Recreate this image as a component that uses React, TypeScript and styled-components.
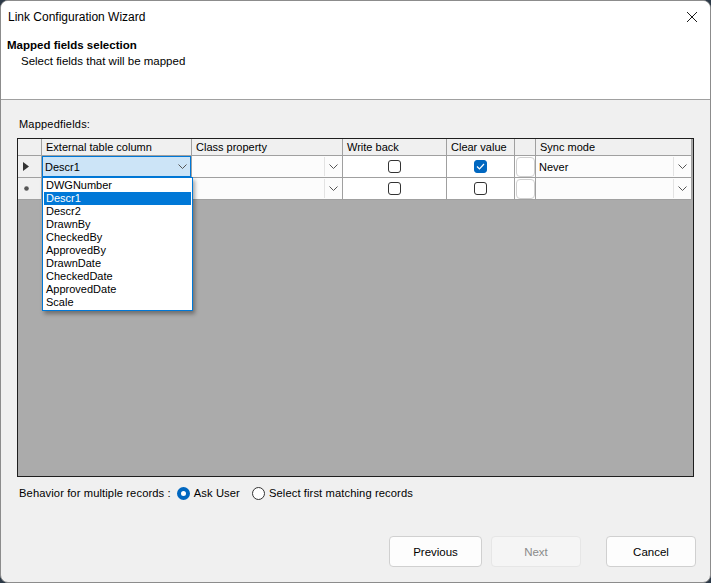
import React from "react";
import styled, { createGlobalStyle } from "styled-components";

const GlobalStyle = createGlobalStyle`
  html, body {
    margin: 0;
    padding: 0;
    background: #2c3947;
  }
  * { box-sizing: border-box; }
`;

const Window = styled.div`
  width: 711px;
  height: 583px;
  background: #f0f0f0;
  border: 1px solid #8c8c8c;
  border-radius: 8px;
  overflow: hidden;
  display: flex;
  flex-direction: column;
  font-family: "Liberation Sans", Arial, sans-serif;
  color: #000;
`;

const Header = styled.div`
  height: 99px;
  background: #fff;
  border-bottom: 1px solid #a0a0a0;
  position: relative;
`;

const TitleBar = styled.div`
  height: 31px;
  display: flex;
  align-items: center;
  justify-content: space-between;
  padding: 0 8px 0 7px;
`;

const Title = styled.div`
  font-size: 12px;
`;

const Close = styled.div`
  width: 14px;
  height: 14px;
  margin-right: 3px;
  display: flex;
`;

const Heading = styled.div`
  font-size: 11.5px;
  font-weight: bold;
  padding-left: 6px;
  margin-top: 7px;
`;

const SubHeading = styled.div`
  font-size: 11.5px;
  padding-left: 20px;
  margin-top: 4px;
`;

const Body = styled.div`
  flex: 1;
  padding: 18px 16px 0 16px;
  display: flex;
  flex-direction: column;
`;

const FieldLabel = styled.div`
  font-size: 11px;
  padding-left: 2px;
  height: 20px;
  letter-spacing: 0.2px;
`;

const Grid = styled.div`
  position: relative;
  height: 339px;
  border: 1px solid #1e1e1e;
  background: #ababab;
  display: flex;
  flex-direction: column;
  font-size: 11px;
`;

const cols = "24px 150px 151px 104px 68px 21px 156px";

const Row = styled.div<{ $h: number }>`
  display: grid;
  grid-template-columns: ${cols};
  height: ${(p) => p.$h}px;
`;

const HeadCell = styled.div`
  background: #f0f0f0;
  border-right: 1px solid #a0a0a0;
  border-bottom: 1px solid #a0a0a0;
  padding-left: 4px;
  display: flex;
  align-items: center;
  white-space: nowrap;
  overflow: hidden;
`;

const RowHead = styled.div`
  background: #f0f0f0;
  border-right: 1px solid #a0a0a0;
  border-bottom: 1px solid #a0a0a0;
  display: flex;
  align-items: center;
  padding-left: 5px;
`;

const Cell = styled.div<{ $center?: boolean }>`
  background: #fff;
  border-right: 1px solid #a0a0a0;
  border-bottom: 1px solid #a0a0a0;
  display: flex;
  align-items: center;
  justify-content: ${(p) => (p.$center ? "center" : "flex-start")};
`;

const Combo = styled.div<{ $active?: boolean }>`
  flex: 1;
  height: 100%;
  display: flex;
  align-items: center;
  background: ${(p) => (p.$active ? "#cce4f7" : "#fcfcfc")};
  border: 1px solid ${(p) => (p.$active ? "#0078d7" : "transparent")};
`;

const ComboText = styled.div`
  flex: 1;
  padding-left: 2px;
  white-space: nowrap;
`;

const ComboButton = styled.div<{ $divider?: boolean }>`
  width: 17px;
  height: 100%;
  display: flex;
  align-items: center;
  justify-content: center;
  border-left: 1px solid ${(p) => (p.$divider ? "#e3e3e3" : "transparent")};
`;

const Check = styled.div<{ $on?: boolean }>`
  width: 13px;
  height: 13px;
  border-radius: 3px;
  border: 1px solid ${(p) => (p.$on ? "#0067c0" : "#333")};
  background: ${(p) => (p.$on ? "#0067c0" : "#fff")};
  display: flex;
  align-items: center;
  justify-content: center;
`;

const SideButton = styled.div`
  width: 19px;
  height: 20px;
  margin-left: 1px;
  border: 1px solid #d0d0d0;
  border-radius: 4px;
  background: #fff;
`;

const Filler = styled.div`
  flex: 1;
`;

const DropList = styled.div`
  position: absolute;
  left: 24px;
  top: 38px;
  width: 151px;
  background: #fff;
  border: 1px solid #0078d7;
  box-shadow: 2px 3px 4px rgba(0, 0, 0, 0.35);
  padding: 1px 1px;
  z-index: 2;
`;

const DropItem = styled.div<{ $sel?: boolean }>`
  height: 13px;
  line-height: 13px;
  padding-left: 2px;
  font-size: 11px;
  background: ${(p) => (p.$sel ? "#0078d7" : "transparent")};
  color: ${(p) => (p.$sel ? "#fff" : "#000")};
`;

const OptionsRow = styled.div`
  display: flex;
  align-items: center;
  height: 32px;
  padding-left: 2px;
  font-size: 11.2px;
  letter-spacing: 0.1px;
`;

const Radio = styled.div<{ $on?: boolean }>`
  width: 13px;
  height: 13px;
  border-radius: 50%;
  margin: 0 4px 0 6px;
  border: ${(p) => (p.$on ? "4px solid #0067c0" : "1px solid #333")};
  background: #fff;
`;

const RadioLabel = styled.span`
  margin-right: 6px;
`;

const Footer = styled.div`
  display: flex;
  justify-content: flex-end;
  padding-top: 27px;
  margin-right: -2px;
`;

const Button = styled.div<{ $w: number; $gap: number; $disabled?: boolean }>`
  width: ${(p) => p.$w}px;
  height: 31px;
  margin-left: ${(p) => p.$gap}px;
  border: 1px solid ${(p) => (p.$disabled ? "#e6e6e6" : "#d0d0d0")};
  border-radius: 4px;
  background: ${(p) => (p.$disabled ? "#f5f5f5" : "#fdfdfd")};
  color: ${(p) => (p.$disabled ? "#8a8a8a" : "#000")};
  display: flex;
  align-items: center;
  justify-content: center;
  font-size: 11.5px;
`;

const Chevron = () => (
  <svg width="9" height="5" viewBox="0 0 9 5">
    <path d="M0.5 0.5 L4.5 4.5 L8.5 0.5" fill="none" stroke="#555" strokeWidth="1" />
  </svg>
);

const Tick = () => (
  <svg width="9" height="7" viewBox="0 0 9 7">
    <path d="M1 3.5 L3.5 6 L8 1" fill="none" stroke="#fff" strokeWidth="1.2" />
  </svg>
);

const items = [
  "DWGNumber",
  "Descr1",
  "Descr2",
  "DrawnBy",
  "CheckedBy",
  "ApprovedBy",
  "DrawnDate",
  "CheckedDate",
  "ApprovedDate",
  "Scale",
];

export default function App() {
  return (
    <>
      <GlobalStyle />
      <Window>
        <Header>
          <TitleBar>
            <Title>Link Configuration Wizard</Title>
            <Close>
              <svg width="14" height="14" viewBox="0 0 14 14">
                <path d="M2 2 L12 12 M12 2 L2 12" stroke="#1a1a1a" strokeWidth="1" />
              </svg>
            </Close>
          </TitleBar>
          <Heading>Mapped fields selection</Heading>
          <SubHeading>Select fields that will be mapped</SubHeading>
        </Header>
        <Body>
          <FieldLabel>Mappedfields:</FieldLabel>
          <Grid>
            <Row $h={17}>
              <HeadCell />
              <HeadCell>External table column</HeadCell>
              <HeadCell>Class property</HeadCell>
              <HeadCell>Write back</HeadCell>
              <HeadCell>Clear value</HeadCell>
              <HeadCell />
              <HeadCell>Sync mode</HeadCell>
            </Row>
            <Row $h={22}>
              <RowHead>
                <svg width="6" height="9" viewBox="0 0 6 9">
                  <path d="M0 0 L6 4.5 L0 9 Z" fill="#333" />
                </svg>
              </RowHead>
              <Cell>
                <Combo $active>
                  <ComboText>Descr1</ComboText>
                  <ComboButton>
                    <Chevron />
                  </ComboButton>
                </Combo>
              </Cell>
              <Cell>
                <Combo>
                  <ComboText />
                  <ComboButton $divider>
                    <Chevron />
                  </ComboButton>
                </Combo>
              </Cell>
              <Cell $center>
                <Check />
              </Cell>
              <Cell $center>
                <Check $on>
                  <Tick />
                </Check>
              </Cell>
              <Cell>
                <SideButton />
              </Cell>
              <Cell>
                <Combo>
                  <ComboText>Never</ComboText>
                  <ComboButton $divider>
                    <Chevron />
                  </ComboButton>
                </Combo>
              </Cell>
            </Row>
            <Row $h={22}>
              <RowHead>
                <svg width="7" height="7" viewBox="0 0 7 7">
                  <circle cx="3.5" cy="3.5" r="2.3" fill="#555" />
                </svg>
              </RowHead>
              <Cell>
                <Combo>
                  <ComboText />
                </Combo>
              </Cell>
              <Cell>
                <Combo>
                  <ComboText />
                  <ComboButton $divider>
                    <Chevron />
                  </ComboButton>
                </Combo>
              </Cell>
              <Cell $center>
                <Check />
              </Cell>
              <Cell $center>
                <Check />
              </Cell>
              <Cell>
                <SideButton />
              </Cell>
              <Cell>
                <Combo>
                  <ComboText />
                  <ComboButton $divider>
                    <Chevron />
                  </ComboButton>
                </Combo>
              </Cell>
            </Row>
            <Filler />
            <DropList>
              {items.map((it) => (
                <DropItem key={it} $sel={it === "Descr1"}>
                  {it}
                </DropItem>
              ))}
            </DropList>
          </Grid>
          <OptionsRow>
            <span>Behavior for multiple records :</span>
            <Radio $on />
            <RadioLabel>Ask User</RadioLabel>
            <Radio />
            <RadioLabel>Select first matching records</RadioLabel>
          </OptionsRow>
          <Footer>
            <Button $w={93} $gap={0}>Previous</Button>
            <Button $w={90} $gap={9} $disabled>
              Next
            </Button>
            <Button $w={90} $gap={25}>Cancel</Button>
          </Footer>
        </Body>
      </Window>
    </>
  );
}
